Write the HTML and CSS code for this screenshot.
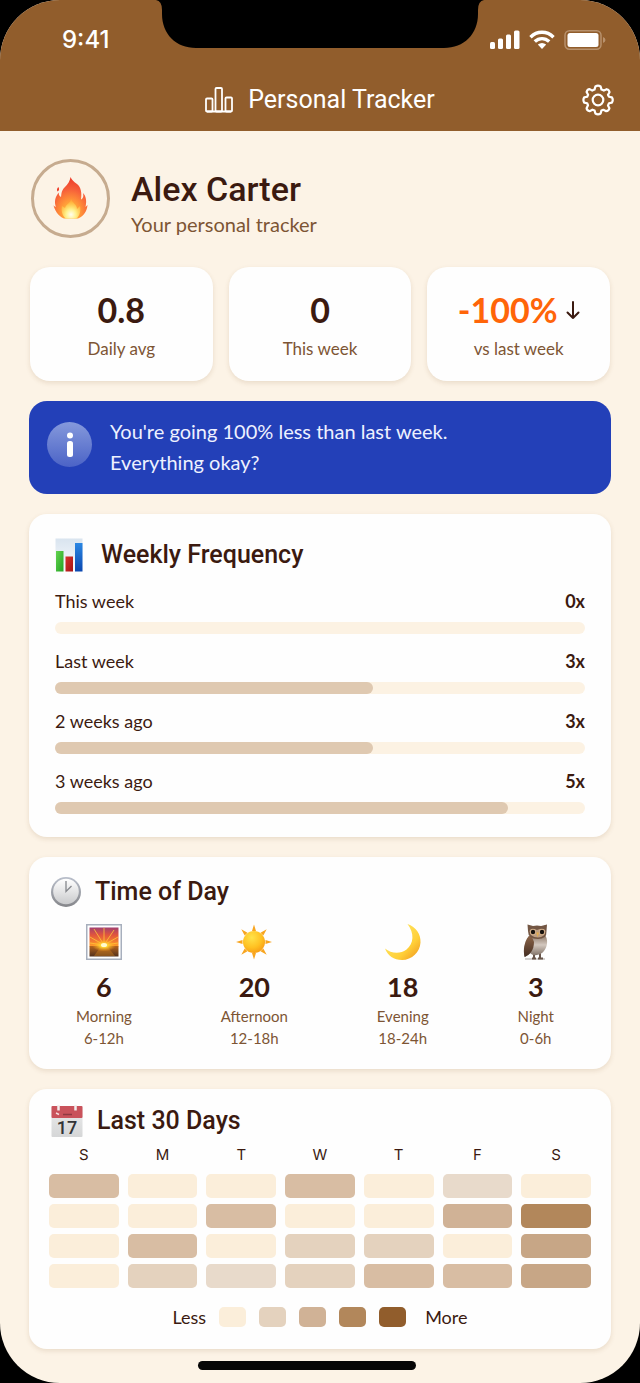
FILE: index.html
```html
<!DOCTYPE html>
<html lang="en">
<head>
  <meta charset="UTF-8" />
  <meta name="viewport" content="width=device-width, initial-scale=1.0"/>
  <title>Personal Tracker</title>
  <link rel="stylesheet" href="styles.css">
</head>
<body>

<div class="phone">
  <svg class="notch" width="328" height="48" viewBox="0 0 328 48" aria-hidden="true">
    <path d="M0 0 Q6 1 6 10 V14 C6 34 20 48 40 48 H288 C308 48 322 34 322 14 V10 Q322 1 328 0 Z"/>
  </svg>

  <header class="header">
    <div class="status-bar">
      <span class="clock">9:41</span>
      <div class="status-icons">
        <svg width="30" height="20" viewBox="0 0 30 20" fill="#fff">
          <rect x="0" y="12" width="5" height="7" rx="1.5"/>
          <rect x="8" y="8.5" width="5" height="10.5" rx="1.5"/>
          <rect x="16" y="4.5" width="5" height="14.5" rx="1.5"/>
          <rect x="24" y="0.5" width="5.5" height="18.5" rx="1.5"/>
        </svg>
        <svg width="26" height="20" viewBox="0 0 26 20" fill="none" stroke="#fff" stroke-width="3.4">
          <path d="M1.500 7.200 C8 0.600 18 0.600 24.500 7.200"/>
          <path d="M5.800 11.600 C10 7.600 16 7.600 20.200 11.600"/>
          <path d="M8.800 14.600 Q13 11.200 17.200 14.600 L13 19 Z" fill="#fff" stroke="none"/>
        </svg>
        <svg width="42" height="20" viewBox="0 0 42 20">
          <rect x="1" y="0.75" width="36" height="18.5" rx="4.5" fill="none" stroke="#b8916c" stroke-width="1.5"/>
          <rect x="3.5" y="3" width="31" height="14" rx="2.5" fill="#fff"/>
          <path d="M39 7 Q41.500 8 41.500 10 Q41.500 12 39 13 Z" fill="#b8916c"/>
        </svg>
      </div>
    </div>
    <div class="nav">
      <div class="nav-title">
        <svg width="28" height="26" viewBox="0 0 28 26" fill="none" stroke="#fff" stroke-width="1.8" stroke-linejoin="round">
          <rect x="1" y="11.5" width="6.5" height="13" rx="1"/>
          <rect x="10.5" y="1" width="6.5" height="23.5" rx="1"/>
          <rect x="20.5" y="10.5" width="6.5" height="14" rx="1"/>
          <path d="M2 24.500 H26"/>
        </svg>
        <h1>Personal Tracker</h1>
      </div>
      <button class="settings" type="button" aria-label="Settings">
        <svg width="32" height="32" viewBox="0 0 32 32" fill="none" stroke="#fff" stroke-width="2.2" stroke-linejoin="round">
          <circle cx="16" cy="16" r="5.3"/>
          <path d="M13.400 2.500 Q16 0.800 18.600 2.500 L19.500 5.600 L21.800 6.600 L24.700 5.200 Q27.400 5.900 27.500 8.300 L26 10.900 L27 12.700 L29.900 13.400 Q31.600 16 29.900 18.600 L27 19.300 L26 21.400 L27.400 24.200 Q26.800 26.800 24.200 27.200 L21.400 25.800 L19.400 26.600 L18.600 29.500 Q16 31.200 13.400 29.500 L12.600 26.600 L10.400 25.700 L7.600 27.200 Q5 26.600 4.600 24.200 L6 21.200 L5.200 19.300 L2.200 18.600 Q0.600 16 2.200 13.400 L5.200 12.700 L6.100 10.700 L4.600 8 Q5.200 5.300 7.700 5.100 L10.300 6.600 L12.500 5.600 Z"/>
        </svg>
      </button>
    </div>
  </header>

  <main class="content">
    <section class="profile">
      <div class="avatar">
        <svg width="36" height="44" viewBox="0 0 36 44">
          <defs>
            <radialGradient id="flameOuter" cx="0.5" cy="0.85" r="0.8">
              <stop offset="0" stop-color="#ffd23c"/>
              <stop offset="0.4" stop-color="#ff8f38"/>
              <stop offset="0.7" stop-color="#f65f3a"/>
              <stop offset="1" stop-color="#ee3f2c"/>
            </radialGradient>
            <radialGradient id="flameInner" cx="0.5" cy="0.8" r="0.7">
              <stop offset="0" stop-color="#fffef0"/>
              <stop offset="0.4" stop-color="#fff08a"/>
              <stop offset="1" stop-color="#ffbd38" stop-opacity="0.5"/>
            </radialGradient>
          </defs>
          <path d="M17.500 1 C17 5 15 8 11.500 11.500 C8 15 8.500 19 8 21 C6.500 20 5.500 18.500 5.800 16.500 C2 21 1 26 3 31 C1.500 30.500 1 30 0.500 29 C1.500 34 5 40 11 42.500 H25 C31 40 34 35 34.500 29 L32.500 31 C34 25 33 20 30 17 C31 21 29.500 23 28 23.500 C29 17 28 11 24 8 C20.500 5.500 18.500 3.500 17.500 1 Z" fill="url(#flameOuter)"/>
          <path d="M5.500 11 Q3 13 4.500 15.500 Q7 14 5.500 11 Z" fill="#ee3f2c"/>
          <path d="M18 23 C18 27 13 28 12 32 L9 30 C8 34 9 40 13 42.500 H23.500 C27 40 28 34 27 30 L24 33 C24 28 19 27 18 23 Z" fill="url(#flameInner)"/>
        </svg>
      </div>
      <div class="profile-text">
        <h2>Alex Carter</h2>
        <p>Your personal tracker</p>
      </div>
    </section>

    <section class="stats">
      <div class="stat">
        <div class="stat-value">0.8</div>
        <div class="stat-label">Daily avg</div>
      </div>
      <div class="stat">
        <div class="stat-value">0</div>
        <div class="stat-label">This week</div>
      </div>
      <div class="stat">
        <div class="stat-value down">-100%
          <svg width="14" height="20" viewBox="0 0 14 20" fill="none" stroke="#3b1a10" stroke-width="2" stroke-linecap="round" stroke-linejoin="round">
            <path d="M7 2 V18 M1.500 12.500 L7 18 L12.500 12.500"/>
          </svg>
        </div>
        <div class="stat-label">vs last week</div>
      </div>
    </section>

    <section class="banner">
      <div class="info">
        <svg width="8" height="26" viewBox="0 0 8 26" fill="#fff">
          <circle cx="4" cy="3.5" r="3"/>
          <rect x="1" y="9" width="6" height="16" rx="2.5"/>
        </svg>
      </div>
      <p>You're going 100% less than last week.<br>Everything okay?</p>
    </section>

    <section class="card weekly">
      <div class="card-title">
        <svg width="28" height="34" viewBox="0 0 28 34">
          <defs>
            <linearGradient id="chartBg" x2="0" y2="1"><stop offset="0" stop-color="#d9e4ef"/><stop offset="1" stop-color="#fafcfe"/></linearGradient>
            <linearGradient id="barGreen" x2="1" y2="1"><stop offset="0" stop-color="#65d34f"/><stop offset="1" stop-color="#22a323"/></linearGradient>
            <linearGradient id="barRed" x2="1" y2="1"><stop offset="0" stop-color="#d8322b"/><stop offset="1" stop-color="#a51316"/></linearGradient>
            <linearGradient id="barBlue" x2="0" y2="1"><stop offset="0" stop-color="#2b87e3"/><stop offset="1" stop-color="#0b47b0"/></linearGradient>
          </defs>
          <rect x="0.5" y="0.5" width="27" height="33" fill="url(#chartBg)"/>
          <rect x="1" y="13" width="7.5" height="20.5" fill="url(#barGreen)"/>
          <rect x="10.5" y="18.5" width="7.5" height="15" fill="url(#barRed)"/>
          <rect x="20" y="5" width="7.5" height="28.5" fill="url(#barBlue)"/>
        </svg>
        <h3>Weekly Frequency</h3>
      </div>
      <div class="freq">
        <div class="freq-row">
          <div class="freq-head"><span>This week</span><strong>0x</strong></div>
          <div class="bar"><div class="fill" style="width: 0%"></div></div>
        </div>
        <div class="freq-row">
          <div class="freq-head"><span>Last week</span><strong>3x</strong></div>
          <div class="bar"><div class="fill" style="width: 60%"></div></div>
        </div>
        <div class="freq-row">
          <div class="freq-head"><span>2 weeks ago</span><strong>3x</strong></div>
          <div class="bar"><div class="fill" style="width: 60%"></div></div>
        </div>
        <div class="freq-row">
          <div class="freq-head"><span>3 weeks ago</span><strong>5x</strong></div>
          <div class="bar"><div class="fill" style="width: 85.5%"></div></div>
        </div>
      </div>
    </section>

    <section class="card time">
      <div class="card-title">
        <svg width="30" height="30" viewBox="0 0 30 30">
          <defs>
            <linearGradient id="clockRim" x2="0" y2="1"><stop offset="0" stop-color="#b9bfcb"/><stop offset="1" stop-color="#85868a"/></linearGradient>
            <linearGradient id="clockFace" x2="0" y2="1"><stop offset="0" stop-color="#fff"/><stop offset="1" stop-color="#c9cacc"/></linearGradient>
          </defs>
          <circle cx="15" cy="15" r="15" fill="url(#clockRim)"/>
          <circle cx="15" cy="14.5" r="12.8" fill="url(#clockFace)"/>
          <path d="M15 4 V14.500 L20.500 9" fill="none" stroke="#85878c" stroke-width="1.3"/>
        </svg>
        <h3>Time of Day</h3>
      </div>
      <div class="periods">
        <div class="period">
          <svg width="36" height="36" viewBox="0 0 36 36">
            <defs>
              <linearGradient id="dawn" x2="0" y2="1"><stop offset="0" stop-color="#a2406f"/><stop offset="0.4" stop-color="#e2553c"/><stop offset="1" stop-color="#ff9d28"/></linearGradient>
              <linearGradient id="sea" x2="0" y2="1"><stop offset="0" stop-color="#b5641c"/><stop offset="1" stop-color="#51301d"/></linearGradient>
              <radialGradient id="glow"><stop offset="0" stop-color="#fff9b8"/><stop offset="0.3" stop-color="#ffd633"/><stop offset="1" stop-color="#ff9d20" stop-opacity="0"/></radialGradient>
            </defs>
            <rect x="0.75" y="0.75" width="34.5" height="34.5" fill="#fff" stroke="#a7afbd" stroke-width="1.5"/>
            <rect x="3.5" y="3.5" width="29" height="19" fill="url(#dawn)"/>
            <rect x="3.5" y="22" width="29" height="10.5" fill="url(#sea)"/>
            <path d="M18 21 L8 5 M18 21 L18 4 M18 21 L28 6 M18 21 L4 13 M18 21 L32 13 M18 21 L4 19 M18 21 L32 19" stroke="#ffc83a" stroke-width="0.8"/>
            <path d="M15 22 H21 L29 32 H8 Z" fill="#e8921f" opacity="0.35"/>
            <ellipse cx="18" cy="21.5" rx="12" ry="6" fill="url(#glow)"/>
            <ellipse cx="18" cy="21" rx="3" ry="2" fill="#fffbd0"/>
          </svg>
          <div class="count">6</div>
          <div class="when">Morning</div>
          <div class="when">6-12h</div>
        </div>
        <div class="period">
          <svg width="36" height="36" viewBox="0 0 36 36">
            <defs>
              <radialGradient id="sun" cx="0.4" cy="0.3" r="0.75"><stop offset="0" stop-color="#ffe34a"/><stop offset="0.6" stop-color="#ffc122"/><stop offset="1" stop-color="#f79a14"/></radialGradient>
            </defs>
            <path fill="#f8a51f" d="M18 0.500 L20 7 H16 Z M18 35.500 L20 29 H16 Z M0 18 L6.500 16 V20 Z M36 18 L29.500 16 V20 Z M5.300 5.300 L11.500 8.700 L8.700 11.500 Z M30.700 5.300 L27.300 11.500 L24.500 8.700 Z M5.300 30.700 L8.700 24.500 L11.500 27.300 Z M30.700 30.700 L24.500 27.300 L27.300 24.500 Z"/>
            <circle cx="18" cy="18" r="11" fill="url(#sun)"/>
          </svg>
          <div class="count">20</div>
          <div class="when">Afternoon</div>
          <div class="when">12-18h</div>
        </div>
        <div class="period">
          <svg width="36" height="36" viewBox="0 0 36 36">
            <defs>
              <linearGradient id="moon" x1="0.3" y1="0.3" x2="0.9" y2="0.9"><stop offset="0" stop-color="#ffe15a"/><stop offset="0.6" stop-color="#ffcf38"/><stop offset="1" stop-color="#f2a324"/></linearGradient>
            </defs>
            <path d="M22.500 0 C31 3 36 10 35.500 18.500 C35 28 27 36 17 36 C9 36 2.500 31.500 0 24.500 C6 29.500 15 30.500 21.500 25.500 C29 19.500 29.500 9 22.500 0 Z" fill="url(#moon)"/>
          </svg>
          <div class="count">18</div>
          <div class="when">Evening</div>
          <div class="when">18-24h</div>
        </div>
        <div class="period">
          <svg width="26" height="36" viewBox="0 0 26 36">
            <defs>
              <linearGradient id="owlBelly" x2="0" y2="1"><stop offset="0" stop-color="#8a7565"/><stop offset="0.45" stop-color="#d3c8bf"/><stop offset="1" stop-color="#75665b"/></linearGradient>
              <linearGradient id="owlWing" x2="0" y2="1"><stop offset="0" stop-color="#8b6448"/><stop offset="1" stop-color="#432d22"/></linearGradient>
            </defs>
            <path d="M2 35 H22" stroke="#c6c2bf" stroke-width="1.5"/>
            <path d="M11 29 V34 M17 29 V34 M9 34.500 H13 M15 34.500 H20" stroke="#675449" stroke-width="2"/>
            <path d="M6 12 C1 18 0 26 2 33 L7 29 C11 33 18 31 21 27 C25 22 25 15 22 11 Z" fill="url(#owlBelly)"/>
            <path d="M6 12 C1 18 0 26 1.500 33 C7 31 11 26 11 18 L9 13 Z" fill="url(#owlWing)"/>
            <path d="M4.500 0.500 L10 2 Q14 1 18 2 L24 0.500 L23.500 7 Q24 15 15 15 Q5 15 5 7 Z" fill="#735643"/>
            <path d="M6.500 7 Q8 3 14 6 Q21 3 22.500 7 Q22 13 15 13.500 Q7 13 6.500 7 Z" fill="#bd9f84"/>
            <circle cx="10" cy="8" r="3" fill="#d9b48d"/><circle cx="19" cy="8" r="3" fill="#d9b48d"/>
            <circle cx="10" cy="8" r="2.2" fill="#181310"/><circle cx="19" cy="8" r="2.2" fill="#181310"/>
            <path d="M13.300 8.500 H16 L14.700 13 Z" fill="#e7ae4b"/>
          </svg>
          <div class="count">3</div>
          <div class="when">Night</div>
          <div class="when">0-6h</div>
        </div>
      </div>
    </section>

    <section class="card days">
      <div class="card-title">
        <svg width="32" height="32" viewBox="0 0 32 32">
          <defs>
            <linearGradient id="page" x2="0" y2="1"><stop offset="0" stop-color="#eceded"/><stop offset="1" stop-color="#d5d6d7"/></linearGradient>
          </defs>
          <rect x="0.5" y="1" width="31" height="31" rx="1" fill="url(#page)"/>
          <rect x="0.5" y="1" width="31" height="12" rx="1" fill="#c9525b"/>
          <path d="M7.500 0 V5.500 M24.500 0 V5.500" stroke="#f3eeee" stroke-width="2.5"/>
          <path d="M12 9.500 H21" stroke="#8f3941" stroke-width="1.5"/>
          <path d="M5 8 L8 9.500" stroke="#f5dcdc" stroke-width="1.5"/>
          <text x="16" y="28.5" text-anchor="middle" class="page-number">17</text>
        </svg>
        <h3>Last 30 Days</h3>
      </div>
      <div class="grid weekdays">
        <span>S</span><span>M</span><span>T</span><span>W</span><span>T</span><span>F</span><span>S</span>
      </div>
      <div class="grid cells">
        <i class="l3"></i><i class="l0"></i><i class="l0"></i><i class="l3"></i><i class="l0"></i><i class="l1"></i><i class="l0"></i>
        <i class="l0"></i><i class="l0"></i><i class="l3"></i><i class="l0"></i><i class="l0"></i><i class="l4"></i><i class="l6"></i>
        <i class="l0"></i><i class="l3"></i><i class="l0"></i><i class="l2"></i><i class="l2"></i><i class="l0"></i><i class="l5"></i>
        <i class="l0"></i><i class="l2"></i><i class="l1"></i><i class="l2"></i><i class="l3"></i><i class="l3"></i><i class="l5"></i>
      </div>
      <div class="legend">
        <span>Less</span>
        <i class="l0"></i><i class="l2"></i><i class="l4"></i><i class="l6"></i><i class="l7"></i>
        <span class="more">More</span>
      </div>
    </section>
  </main>

  <div class="home-bar"></div>
</div>

</body>
</html>
```

FILE: styles.css
```css
* {
  margin: 0;
  padding: 0;
  box-sizing: border-box;
}

body {
  font-family: Lato, 'Noto Sans', sans-serif;
  background: #000;
  color: #3b1a10;
}

svg {
  display: block;
  flex-shrink: 0;
}

.phone {
  position: relative;
  min-height: 100vh;
  background: #fcf3e6;
  border-radius: 60px;
  overflow: hidden;
}

.notch {
  position: absolute;
  top: 0;
  left: 50%;
  transform: translateX(-50%);
}

.header {
  background: #915d2c;
  color: #fff;
}

.status-bar {
  display: flex;
  justify-content: space-between;
  align-items: center;
  padding: 24px 34px 0 62px;
}

.clock {
  font-family: Inter, sans-serif;
  font-size: 24px;
  line-height: 32px;
  font-weight: 500;
}

.status-icons {
  display: flex;
  gap: 9px;
}

.nav {
  display: grid;
  grid-template-columns: 1fr auto 1fr;
  align-items: center;
  padding: 12px 26px 0;
  height: 75px;
}

.nav-title {
  grid-column: 2;
  display: flex;
  align-items: center;
  gap: 15px;
}

.nav-title h1 {
  font-family: Roboto, sans-serif;
  font-size: 25px;
  line-height: 32px;
  font-weight: 400;
}

.settings {
  justify-self: end;
  background: none;
  border: none;
  cursor: pointer;
}

.content {
  display: flex;
  flex-direction: column;
  gap: 20px;
  padding: 26px 29px 0;
}

.profile {
  display: flex;
  align-items: center;
  gap: 21px;
  padding: 0 2px;
  margin-bottom: 8px;
}

.avatar {
  display: flex;
  align-items: center;
  justify-content: center;
  width: 79px;
  height: 79px;
  border: 3px solid #c6ab8f;
  border-radius: 50%;
}

.profile-text {
  padding-top: 12px;
}

.profile-text h2 {
  font-family: Roboto, sans-serif;
  font-size: 34px;
  line-height: 40px;
  font-weight: 500;
}

.profile-text p {
  font-size: 20px;
  line-height: 30px;
  color: #7d5534;
}

.stats {
  display: grid;
  grid-template-columns: repeat(3, 1fr);
  gap: 16px;
  padding: 0 1px;
}

.stat {
  background: #fefefe;
  border-radius: 20px;
  padding: 21px 10px 20px;
  text-align: center;
  box-shadow: 0 2px 5px rgba(120, 80, 30, 0.14);
}

.stat-value {
  font-size: 34px;
  line-height: 44px;
  font-weight: 700;
  margin-bottom: 5px;
}

.stat-value.down {
  display: flex;
  align-items: center;
  justify-content: center;
  gap: 8px;
  color: #ff6509;
}

.stat-label {
  font-size: 17px;
  line-height: 24px;
  color: #7d5534;
}

.banner {
  display: flex;
  gap: 18px;
  padding: 15px 18px 16px;
  background: #2340b8;
  color: #eef1ff;
  border-radius: 18px;
  font-size: 20px;
  line-height: 31px;
}

.info {
  display: flex;
  align-items: center;
  justify-content: center;
  flex-shrink: 0;
  width: 45px;
  height: 45px;
  margin-top: 6px;
  border-radius: 50%;
  background: linear-gradient(#8599dc, #4b63c6);
}

.card {
  background: #fefefe;
  border-radius: 18px;
  box-shadow: 0 2px 5px rgba(120, 80, 30, 0.14);
}

.card-title {
  display: flex;
  align-items: center;
  gap: 14px;
  height: 36px;
}

.card-title h3 {
  font-family: Roboto, sans-serif;
  font-size: 25px;
  line-height: 36px;
  font-weight: 500;
}

.weekly {
  padding: 23px 26px;
}

.weekly .card-title {
  gap: 18px;
  margin-bottom: 16px;
}

.freq {
  display: flex;
  flex-direction: column;
  gap: 15px;
}

.freq-head {
  display: flex;
  justify-content: space-between;
  margin-bottom: 9px;
  font-size: 18px;
  line-height: 24px;
}

.freq-head strong {
  font-weight: 700;
}

.bar {
  height: 12px;
  border-radius: 6px;
  background: #fcf2e3;
}

.fill {
  height: 100%;
  border-radius: 6px;
  background: #dfc9b1;
}

.time {
  padding: 17px 22px 20px;
}

.periods {
  display: flex;
  justify-content: space-between;
  margin-top: 14px;
  padding: 0 35px 0 25px;
}

.period {
  display: flex;
  flex-direction: column;
  align-items: center;
}

.count {
  margin: 11px 0 2px;
  font-size: 27px;
  line-height: 32px;
  font-weight: 700;
}

.when {
  font-size: 15px;
  line-height: 22px;
  color: #7d5534;
}

.days {
  padding: 14px 20px 20px;
}

.days .card-title {
  padding-left: 2px;
}

.page-number {
  font-family: Roboto, sans-serif;
  font-size: 18px;
  font-weight: 500;
  fill: #333436;
}

.grid {
  display: grid;
  grid-template-columns: repeat(7, 1fr);
  gap: 6px 9px;
}

.weekdays {
  margin: 6px 0 9px;
  font-family: Inter, sans-serif;
  font-size: 15px;
  line-height: 20px;
  text-align: center;
}

.cells i {
  height: 24px;
  border-radius: 5px;
}

.legend {
  display: flex;
  align-items: center;
  justify-content: center;
  gap: 13px;
  margin-top: 17px;
  font-size: 18px;
  line-height: 24px;
}

.legend i {
  width: 27px;
  height: 20px;
  border-radius: 5px;
}

.legend .more {
  margin-left: 6px;
}

.l0 { background: #fbeeda; }
.l1 { background: #e8dacb; }
.l2 { background: #e4d2be; }
.l3 { background: #d8bda3; }
.l4 { background: #d0b296; }
.l5 { background: #c7a686; }
.l6 { background: #b2875b; }
.l7 { background: #915d2c; }

.home-bar {
  width: 34%;
  height: 9px;
  margin: 12px 0 13px 31%;
  border-radius: 5px;
  background: #060606;
}
```
